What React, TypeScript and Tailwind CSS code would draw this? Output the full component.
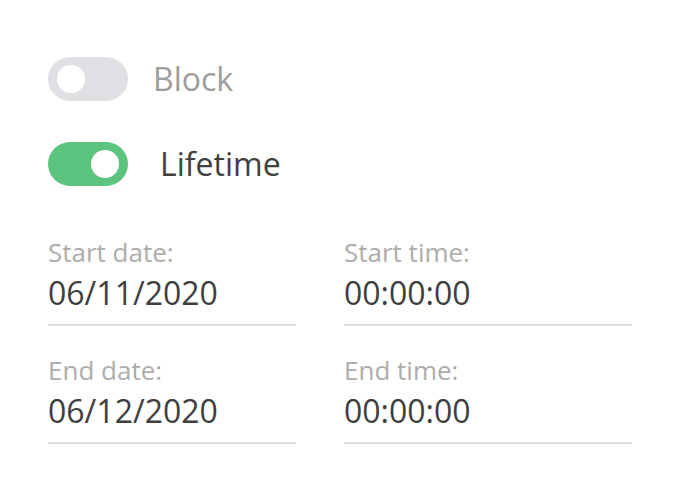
import React from "react";

function Toggle({ on }: { on: boolean }) {
  return (
    <div
      className={
        "flex h-[44px] w-[80px] shrink-0 items-center rounded-full px-[9px] " +
        (on ? "justify-end bg-[#5cc47e]" : "justify-start bg-[#dfe0e4]")
      }
    >
      <div className="h-[28px] w-[28px] rounded-full bg-white" />
    </div>
  );
}

function Field({ label, value }: { label: string; value: string }) {
  return (
    <div className="flex flex-col">
      <div className="text-[26px] leading-[32px] text-[#adadad]">{label}</div>
      <div className="mt-[5px] border-b-2 border-[#dcdcdc] pb-[11px] text-[32px] leading-[40px] text-[#3f3f3f]">
        {value}
      </div>
    </div>
  );
}

export default function App() {
  return (
    <div
      className="h-[502px] w-[680px] overflow-hidden bg-white"
      style={{ fontFamily: '"Open Sans", "Noto Sans", sans-serif' }}
    >
      <div className="flex flex-col px-[48px] pt-[57px]">
        <div className="flex items-center gap-[25px]">
          <Toggle on={false} />
          <span className="text-[32px] leading-[44px] text-[#9d9d9d]">Block</span>
        </div>
        <div className="mt-[41px] flex items-center gap-[32px]">
          <Toggle on={true} />
          <span className="text-[32px] leading-[44px] text-[#404040]">Lifetime</span>
        </div>
        <div className="mt-[50px] grid grid-cols-[248px_288px] gap-x-[48px] gap-y-[28px]">
          <Field label="Start date:" value="06/11/2020" />
          <Field label="Start time:" value="00:00:00" />
          <Field label="End date:" value="06/12/2020" />
          <Field label="End time:" value="00:00:00" />
        </div>
      </div>
    </div>
  );
}
